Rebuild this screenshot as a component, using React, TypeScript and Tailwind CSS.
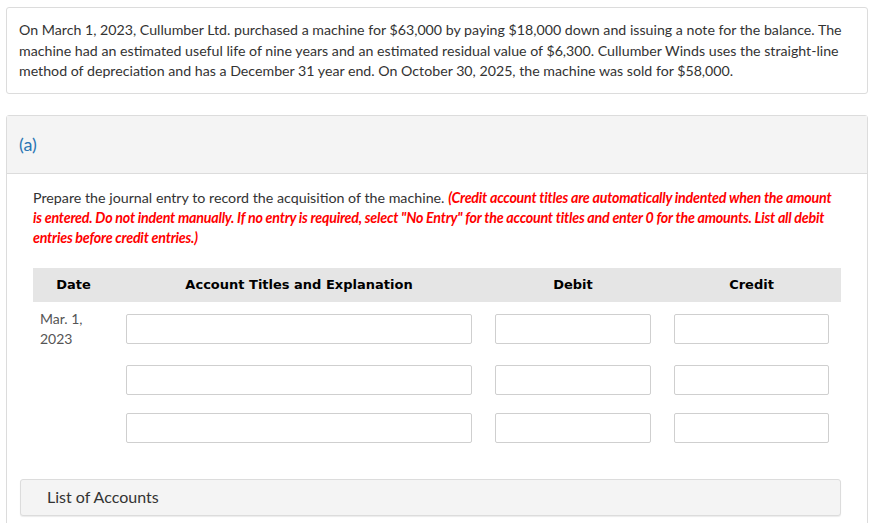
import React from "react";

const Input = () => (
  <div className="h-[30px] w-full border border-[#cfcfcf] rounded-[2px] bg-white" />
);

export default function App() {
  const rows = [0, 1, 2];
  return (
    <div className="w-[872px] h-[523px] overflow-hidden bg-white pt-[7px] pl-[6px] pr-[4px] text-[#333333]" style={{ fontFamily: "Lato, 'Noto Sans', sans-serif" }}>
      <div className="border border-[#dcdcdc] rounded-[3px] pl-[12px] pr-[10px] pt-[12px] pb-[11px] text-[14.2px] leading-[20.5px]">
        On March 1, 2023, Cullumber Ltd. purchased a machine for $63,000 by paying $18,000 down and issuing a note for the balance. The machine had an estimated useful life of nine years and an estimated residual value of $6,300. Cullumber Winds uses the straight-line method of depreciation and has a December 31 year end. On October 30, 2025, the machine was sold for $58,000.
      </div>
      <div className="mt-[21px] border border-[#dcdcdc] rounded-[3px] h-[500px]">
        <div className="h-[58px] bg-[#f4f4f4] border-b border-[#dcdcdc] flex items-center pl-[12px] text-[18px] text-[#2a75b3]">
          (a)
        </div>
        <div className="pl-[26px] pr-[26px] pt-[14px]">
          <p className="text-[14.25px] leading-[20px]">
            Prepare the journal entry to record the acquisition of the machine.{" "}
            <span className="italic font-bold text-[#ff0000] tracking-[-0.22px]">
              (Credit account titles are automatically indented when the amount is entered. Do not indent manually. If no entry is required, select "No Entry" for the account titles and enter 0 for the amounts. List all debit entries before credit entries.)
            </span>
          </p>
          <div
            className="mt-[20px] grid grid-cols-[81px_370px_178px_179px] h-[34px] bg-[#e5e5e5] items-center text-[13px] font-bold text-black"
            style={{ fontFamily: "'DejaVu Sans', Verdana, sans-serif" }}
          >
            <div className="text-center">Date</div>
            <div className="text-center">Account Titles and Explanation</div>
            <div className="text-center">Debit</div>
            <div className="text-center">Credit</div>
          </div>
          {rows.map((r) => (
            <div key={r} className={`grid grid-cols-[81px_370px_178px_179px] ${r === 0 ? "pt-[12px] h-[63px]" : "h-[48px]"}`}>
              <div className="pl-[7px] text-[14px] leading-[20px] text-[#555555] -mt-[5px]">
                {r === 0 ? (
                  <>
                    Mar. 1,
                    <br />
                    2023
                  </>
                ) : null}
              </div>
              <div className="px-[12px]"><Input /></div>
              <div className="px-[11px]"><Input /></div>
              <div className="px-[12px]"><Input /></div>
            </div>
          ))}
        </div>
        <div className="ml-[13px] mr-[26px] mt-[18px] h-[37px] bg-[#f4f4f4] border border-[#dcdcdc] rounded-[3px] shadow-[0_1px_1px_rgba(0,0,0,0.08)] flex items-center pl-[26px] text-[16px] text-[#333333]">
          List of Accounts
        </div>
      </div>
    </div>
  );
}
